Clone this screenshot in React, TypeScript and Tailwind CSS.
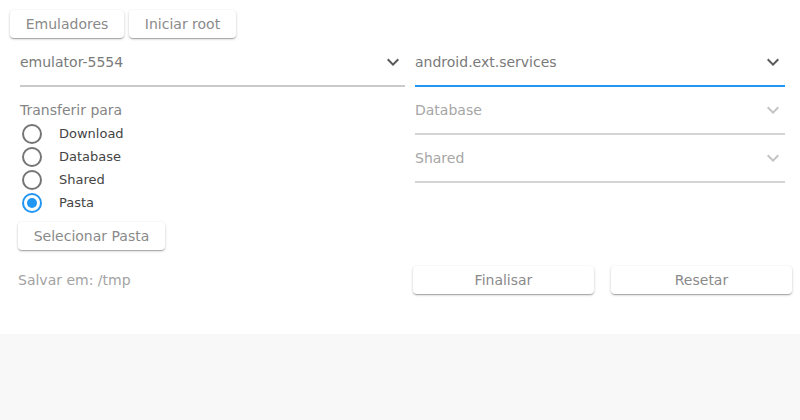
import React, { useState } from 'react';

const btn =
  "h-[28px] bg-white rounded-[4px] text-[14px] text-[#8a8a8a] shadow-[0_1px_3px_rgba(0,0,0,0.2),0_1px_1px_rgba(0,0,0,0.14),0_2px_1px_-1px_rgba(0,0,0,0.12)]";

const Chevron: React.FC<{ color: string }> = ({ color }) => (
  <svg width="24" height="24" viewBox="0 0 24 24" fill={color}>
    <path d="M16.59 8.59 12 13.17 7.41 8.59 6 10l6 6 6-6z" />
  </svg>
);

const Select: React.FC<{ value: string; disabled?: boolean; focused?: boolean }> = ({
  value,
  disabled,
  focused,
}) => (
  <div
    className={
      "h-[48px] flex items-center justify-between border-b-2 " +
      (focused ? "border-[#2196f3]" : disabled ? "border-[#d4d4d4]" : "border-[#cacaca]")
    }
  >
    <span className={"text-[14px] " + (disabled ? "text-[#a6a6a6]" : "text-[#7a7a7a]")}>{value}</span>
    <Chevron color={disabled ? "#c4c4c4" : "#5a5a5a"} />
  </div>
);

const Radio: React.FC<{ checked: boolean }> = ({ checked }) => (
  <svg width="24" height="24" viewBox="0 0 24 24">
    <circle cx="12" cy="12" r="9" fill="none" stroke={checked ? "#2196f3" : "#757575"} strokeWidth="2" />
    {checked && <circle cx="12" cy="12" r="5" fill="#2196f3" />}
  </svg>
);

export default function App() {
  const [target, setTarget] = useState('Pasta');
  const options = ['Download', 'Database', 'Shared', 'Pasta'];

  return (
    <div className="min-h-screen bg-[#f8f8f8] font-['DejaVu_Sans',sans-serif]">
      <div className="bg-white h-[334px] pt-[10px]">
        {/* top buttons */}
        <div className="flex gap-[5px] px-[10px]">
          <button className={btn + " w-[114px]"}>Emuladores</button>
          <button className={btn + " w-[107px]"}>Iniciar root</button>
        </div>

        <div className="grid grid-cols-[405px_395px] items-start mt-px">
          {/* left column */}
          <div className="pl-[20px]">
            <Select value="emulator-5554" />
            <div className="mt-[13px] h-[20px] leading-[20px] text-[14px] text-[#858585]">Transferir para</div>
            <div className="mt-[2px]">
              {options.map((o) => (
                <div key={o} className="h-[23px] flex items-center cursor-pointer" onClick={() => setTarget(o)}>
                  <Radio checked={target === o} />
                  <span className="ml-[15px] text-[13px] text-[#444444]">{o}</span>
                </div>
              ))}
            </div>
            <button className={btn + " block w-[147px] mt-[8px] -ml-[2px]"}>Selecionar Pasta</button>
          </div>

          {/* right column */}
          <div className="pl-[10px] pr-[15px]">
            <Select value="android.ext.services" focused />
            <Select value="Database" disabled />
            <Select value="Shared" disabled />
          </div>
        </div>

        {/* bottom row */}
        <div className="grid grid-cols-[405px_395px] items-center mt-[16px] h-[28px]">
          <div className="pl-[18px] text-[14px] text-[#a3a3a3]">Salvar em: /tmp</div>
          <div className="flex gap-[17px] pl-[8px]">
            <button className={btn + " w-[181px]"}>Finalisar</button>
            <button className={btn + " w-[181px]"}>Resetar</button>
          </div>
        </div>
      </div>
    </div>
  );
}
